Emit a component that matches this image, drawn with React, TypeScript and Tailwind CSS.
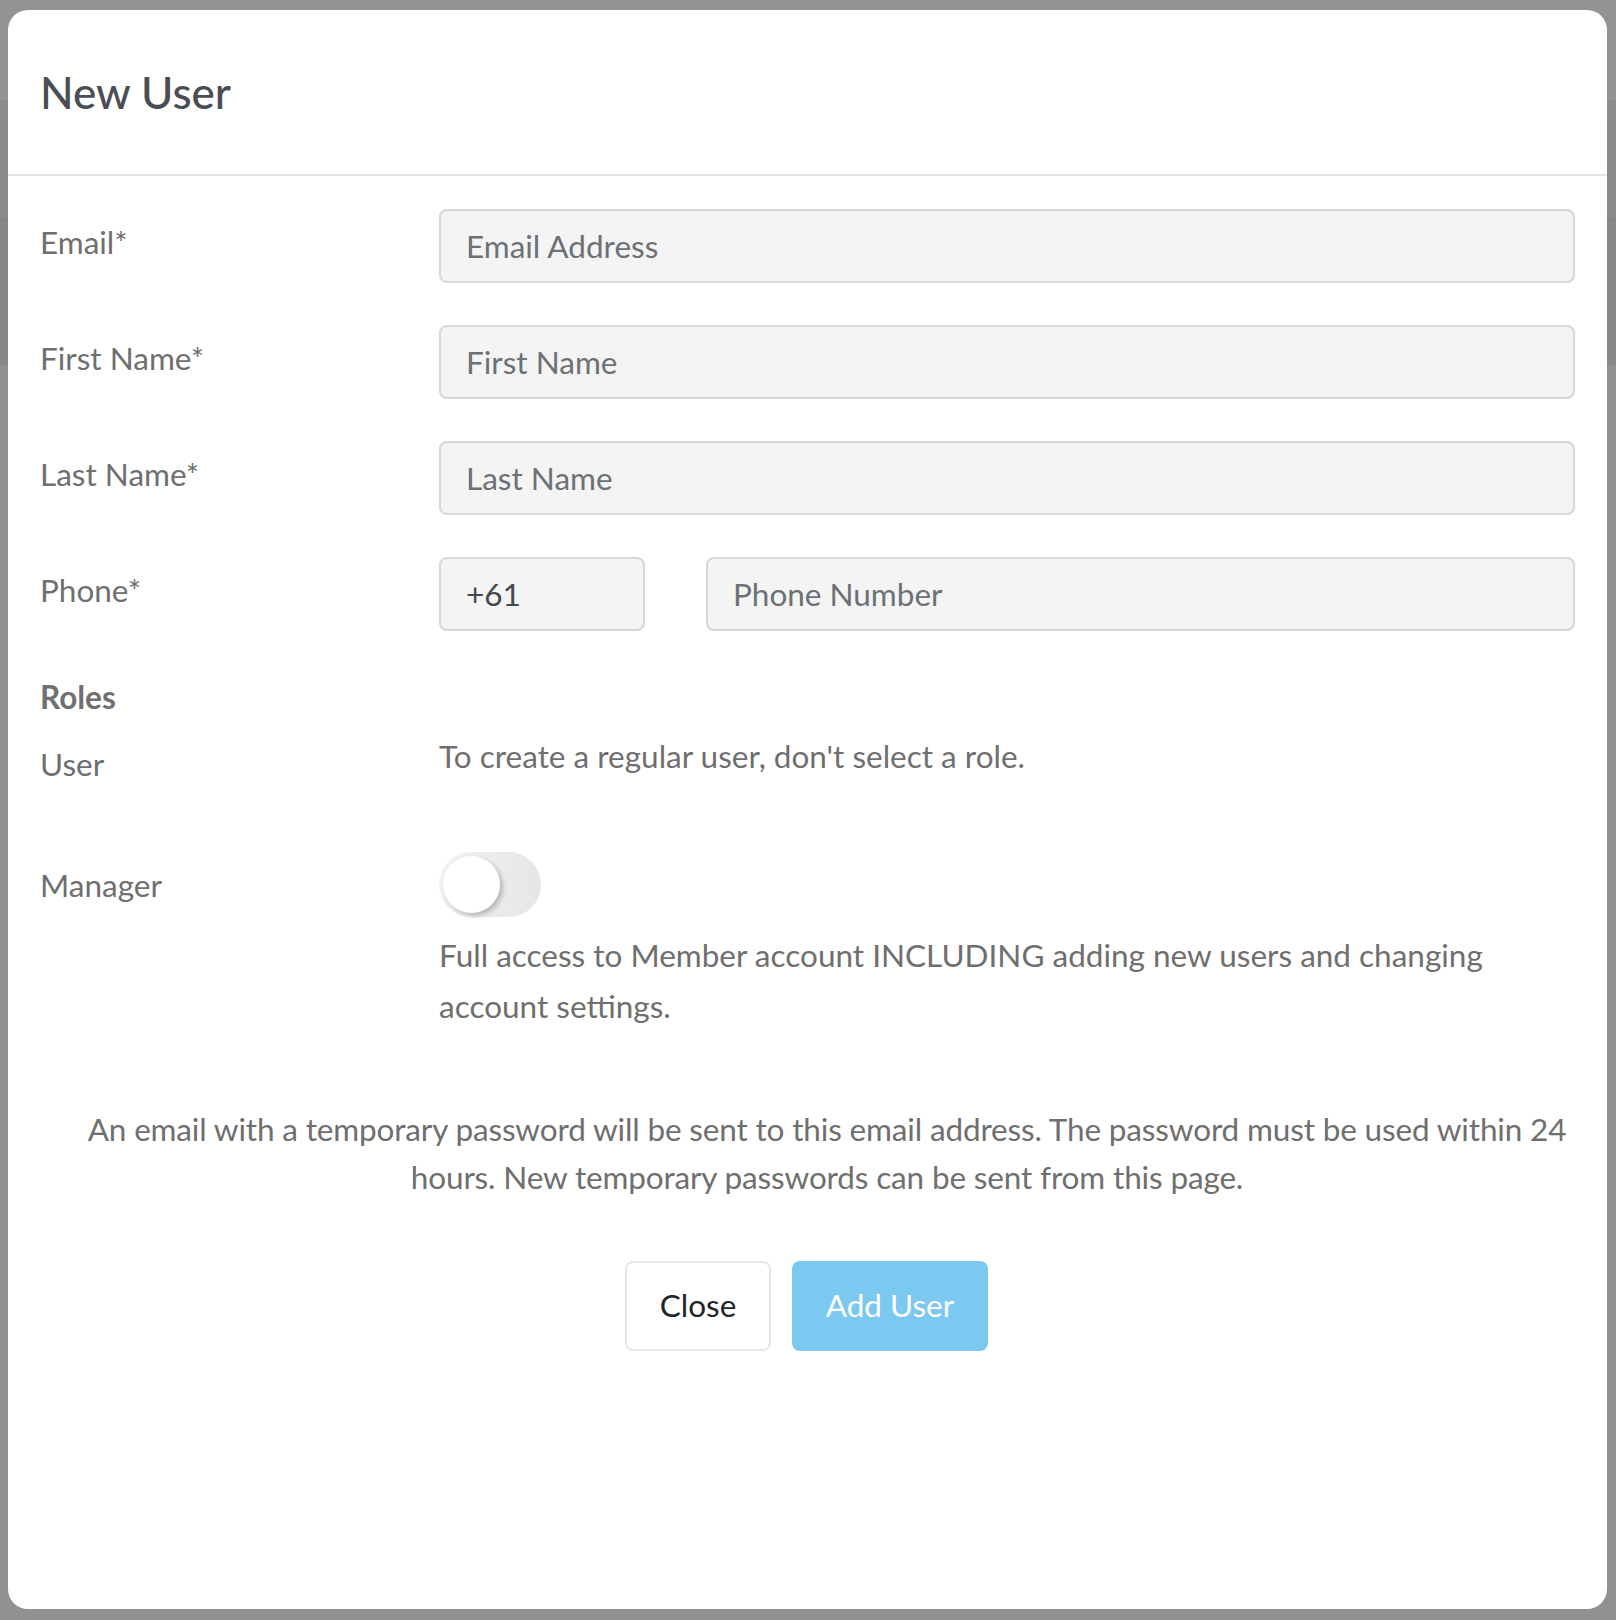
import { useState } from "react"

const labelCls = "text-[31.5px] leading-[48px] text-[#6f6f6f]"
const inputCls =
  "h-[74px] w-full rounded-[8px] border-2 border-[#d6d6d6] bg-[#f4f4f4] px-[25px] text-[31.5px] text-[#45494d] placeholder:text-[#6c7176] outline-none"

function Row({ label, children }: { label: string; children: React.ReactNode }) {
  return (
    <div className="grid grid-cols-[399px_1fr] mb-[42px]">
      <div className={`${labelCls} pt-[9px]`}>{label}</div>
      <div>{children}</div>
    </div>
  )
}

export default function App() {
  const [manager, setManager] = useState(false)

  return (
    <div
      className="min-h-screen pt-[10px] pl-[8px] pr-[9px] pb-[11px] bg-[linear-gradient(to_bottom,#939393_0,#939393_100px,#8c8c8c_100px,#8c8c8c_120px,#8a8a8a_120px,#8a8a8a_217px,#858585_217px,#858585_222px,#888888_222px,#888888_365px,#919191_365px)]"
      style={{ fontFamily: "Lato, 'Open Sans', sans-serif" }}
    >
      <div className="h-[1599px] rounded-[20px] bg-white flex flex-col">
        <div className="h-[166px] border-b-2 border-[#dfe3e7] px-[32px] flex items-center">
          <h1 className="text-[44px] font-medium text-[#4a4e54]">New User</h1>
        </div>

        <div className="pt-[33px] pl-[32px] pr-[32px]">
          <Row label="Email*">
            <input className={inputCls} placeholder="Email Address" />
          </Row>
          <Row label="First Name*">
            <input className={inputCls} placeholder="First Name" />
          </Row>
          <Row label="Last Name*">
            <input className={inputCls} placeholder="Last Name" />
          </Row>
          <Row label="Phone*">
            <div className="flex gap-[61px]">
              <input className={`${inputCls} !w-[206px] shrink-0`} defaultValue="+61" />
              <input className={inputCls} placeholder="Phone Number" />
            </div>
          </Row>

          <div className="mt-[1px] text-[31.5px] leading-[48px] font-bold text-[#707070]">Roles</div>

          <div className="grid grid-cols-[399px_1fr] mt-[11px]">
            <div className={`${labelCls} pt-[8px]`}>User</div>
            <div className={labelCls}>To create a regular user, don't select a role.</div>
          </div>

          <div className="grid grid-cols-[399px_1fr] mt-[64px]">
            <div className={`${labelCls} pt-[9px]`}>Manager</div>
            <div>
              <button
                onClick={() => setManager(!manager)}
                className={`flex h-[65px] w-[102px] items-center rounded-full px-[4px] ${
                  manager ? "justify-end bg-[#7bc8f0]" : "justify-start bg-[linear-gradient(to_right,#f2f2f2,#e6e6e6)]"
                }`}
              >
                <span className="block h-[57px] w-[57px] rounded-full bg-white shadow-[3px_3px_5px_rgba(0,0,0,0.22)]" />
              </button>
              <p className="mt-[13px] text-[31.5px] leading-[51px] text-[#6f6f6f]">
                Full access to Member account INCLUDING adding new users and changing account settings.
              </p>
            </div>
          </div>

          <p className="mt-[73px] ml-[35px] mr-[-4px] text-center text-[31.5px] leading-[48px] tracking-[-0.15px] text-[#6f6f6f]">
            An email with a temporary password will be sent to this email address. The password must be used within 24
            hours. New temporary passwords can be sent from this page.
          </p>

          <div className="mt-[60px] flex justify-center gap-[21px] ml-[-2px]">
            <button className="h-[90px] w-[146px] rounded-[8px] border-2 border-[#e6e6e6] bg-white text-[31.5px] text-[#212529]">
              Close
            </button>
            <button className="h-[90px] w-[196px] rounded-[8px] bg-[#7bc8f0] text-[31.5px] text-white">Add User</button>
          </div>
        </div>
      </div>
    </div>
  )
}
